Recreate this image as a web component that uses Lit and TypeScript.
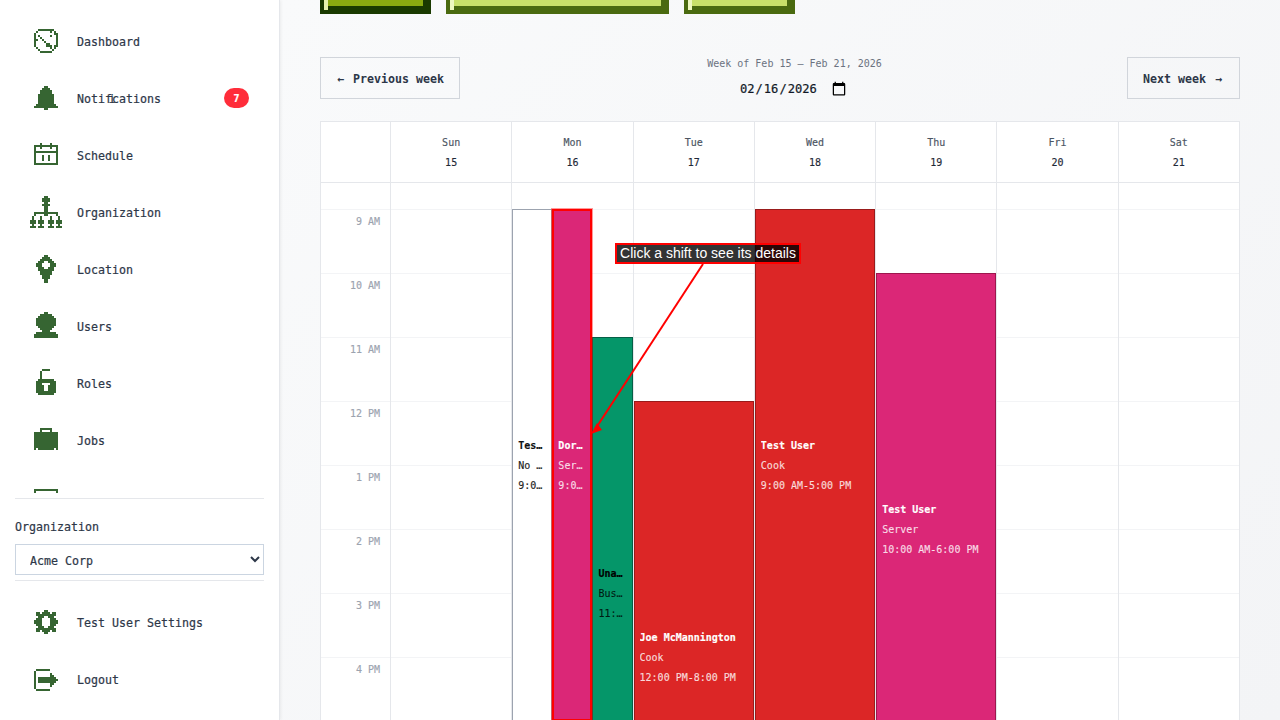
import { LitElement, html, css, svg } from "lit";
import { customElement } from "lit/decorators.js";

const ICONS: Record<string, string[]> = {
  dashboard: ["..########..",".#......#.#.","#.........##","#.#.....#..#","#..#.......#","##..#......#","#....#.....#","#.....##...#","#.....###.##",".#......#.#.","..#......#..","...######..."],
  bell: [".....##.....","....####....","...######...","...######...","..########..","..########..","..########..","..########..","..########..",".##########.","############",".....##....."],
  schedule: ["...#....#...","############","#..#....#..#","#..........#","############","#..........#","#...#..#...#","#...#..#...#","#...#..#...#","#..........#","############","............"],
  org: [".......##.......","......####......","......####......",".......##.......","......####......",".......##.......",".......##.......",".......##.......","..############..","..#....##....#..",".#...#....#...#.",".#...#....#...#.","###.###..###.###","###.###..###.###",".#...#....#...#.","###.###..###.###"],
  location: ["....##....","...####...","..######..",".###..###.","###....###","###....###",".###..###.",".########.","..######..","..######..","...####...","...####...","....##....","....##...."],
  users: [".....##.....","...######...","..########..",".##########.",".##########.",".##########.",".##########.","..########..","...######...","....####....",".##########.","############","############","............"],
  roles: ["...####...","..#.......","..#.......","..#.......","..#.......",".########.","##########","###....###","####..####","####..####","####..####","##########",".########.",".........."],
  jobs: ["...######...","...#....#...","############","############","############","############","############","############","############","############","#.########.#","............"],
  next: ["............","............","############","#..........#","#..........#","#..........#","#..........#","#..........#","#..........#","#..........#","#..........#","############"],
  gear: [".....##.....",".##.####.##.",".##########.","..###..###..",".###....###.","####....####","####....####",".###....###.","..###..###..",".##########.",".##.####.##.",".....##....."],
  logout: ["............",".#######....","#...........","#.......#...","#.......##..","#.#########.","#.##########","#.#########.","#.......##..","#.......#...","#...........",".#######...."],
};

function icon(name: string) {
  const rows = ICONS[name];
  const w = rows[0].length, h = rows.length;
  let d = "";
  rows.forEach((r, y) => {
    for (let x = 0; x < w; x++) if (r[x] === "#") {
      let e = x;
      while (e + 1 < w && r[e + 1] === "#") e++;
      d += `M${x} ${y}H${e + 1}V${y + 1}H${x}Z`;
      x = e;
    }
  });
  return html`<svg class="pix" width=${w * 2} height=${h * 2} viewBox="0 0 ${w} ${h}">${svg`<path d=${d}></path>`}</svg>`;
}

const notif = html`Noti<span class="lig">fi</span>cations`;
const NAV = [
  ["dashboard", "Dashboard", 0], ["bell", notif, 7], ["schedule", "Schedule", 0],
  ["org", "Organization", 0], ["location", "Location", 0], ["users", "Users", 0],
  ["roles", "Roles", 0], ["jobs", "Jobs", 0], ["next", "", 0],
] as [string, unknown, number][];

const DAYS = [["Sun", 15], ["Mon", 16], ["Tue", 17], ["Wed", 18], ["Thu", 19], ["Fri", 20], ["Sat", 21]];
const HOURS = ["9 AM", "10 AM", "11 AM", "12 PM", "1 PM", "2 PM", "3 PM", "4 PM"];

interface Shift { day: number; start: number; col: number; cols: number; name: string; role: string; time: string; kind: string; }
const SHIFTS: Shift[] = [
  { day: 1, start: 0, col: 0, cols: 3, name: "Test User", role: "No role", time: "9:00 AM-5:00 PM", kind: "open" },
  { day: 1, start: 0, col: 1, cols: 3, name: "Dorothy Smith", role: "Server", time: "9:00 AM-5:00 PM", kind: "pink hl" },
  { day: 1, start: 2, col: 2, cols: 3, name: "Unassigned", role: "Busser", time: "11:00 AM-7:00 PM", kind: "green" },
  { day: 2, start: 3, col: 0, cols: 1, name: "Joe McMannington", role: "Cook", time: "12:00 PM-8:00 PM", kind: "red" },
  { day: 3, start: 0, col: 0, cols: 1, name: "Test User", role: "Cook", time: "9:00 AM-5:00 PM", kind: "red" },
  { day: 4, start: 1, col: 0, cols: 1, name: "Test User", role: "Server", time: "10:00 AM-6:00 PM", kind: "pink" },
];

@customElement("app-root")
export class AppRoot extends LitElement {
  static styles = css`
    :host { display: flex; position: relative; width: 1280px; height: 720px; overflow: hidden;
      font-family: "DejaVu Sans Mono", "Liberation Mono", monospace; color: #2d3748; }
    * { box-sizing: border-box; }
    .side { width: 280px; flex: none; height: 720px; background: #fff; border-right: 1px solid #e5e7eb;
      box-shadow: 1px 0 3px rgba(0,0,0,.06); display: flex; flex-direction: column; position: relative; z-index: 1; }
    .nav { height: 493px; overflow: hidden; padding-top: 13px; flex: none; }
    .item { height: 57px; display: flex; align-items: center; font-size: 11.63px; padding-right: 30px;
      -webkit-text-stroke: 0.2px; }
    .slot { width: 32px; margin-left: 30px; margin-right: 15px; padding-bottom: 1px; display: flex;
      justify-content: center; flex: none; }
    .pix { display: block; fill: #366532; shape-rendering: crispEdges; }
    .label { flex: 1; padding-top: 1px; }
    .lig { letter-spacing: -3.5px; }
    .badge { width: 25px; height: 20px; margin-bottom: 1px; border-radius: 10px; background: #ff2d3a; color: #fff;
      font-size: 10px; font-weight: 700; display: flex; align-items: center; justify-content: center; }
    .orgbox { margin: 5px 15px 0; width: 249px; border-top: 1px solid #e5e7eb; border-bottom: 1px solid #e5e7eb;
      padding: 20px 0 5px; }
    .orglabel { font-size: 11.63px; line-height: 17px; margin-bottom: 8px; -webkit-text-stroke: 0.2px; }
    select { display: block; width: 249px; height: 31px; background: #fff; border: 1px solid #cbd5e1; border-radius: 0;
      padding: 2px 10px 0; font: 11.63px "DejaVu Sans Mono", monospace; color: #2d3748; -webkit-text-stroke: 0.2px; }
    .bottom { padding-top: 13px; }
    .main { flex: 1; height: 720px; padding: 0 40px; overflow: hidden;
      background: linear-gradient(135deg, #f9fafb, #f3f4f6); }
    .tops { display: flex; gap: 15px; height: 14px; }
    .pb { height: 14px; width: 111px; padding-left: 4px; display: flex; align-items: flex-start; }
    .pb.wide { width: 223px; }
    .pb.a { background: #1a3a00; --in: #8aaa10; --pale: #e6f3ac; }
    .pb.b { background: #4a6a10; --in: #c8e06a; --pale: #eef8c0; }
    .pb i { display: block; width: 4px; height: 10px; background: var(--pale); flex: none; }
    .pb b { display: block; height: 6px; flex: 1; margin-right: 8px; background: var(--in); }
    .head { display: flex; justify-content: space-between; align-items: flex-start; height: 42px; margin: 43px 0 22px; }
    .btn { height: 42px; border: 1px solid #d1d5db; display: flex; align-items: center; padding: 2px 15px 0;
      font-size: 11.63px; font-weight: 700; color: #2d3748; white-space: nowrap; gap: 7px; }
    .btn.nx { gap: 8px; }
    .btn span { display: block; width: 10px; text-align: center; }
    .center { display: flex; flex-direction: column; align-items: center; }
    .week { font-size: 10px; line-height: 14px; color: #6b7280; padding-left: 2px; }
    input { font: 12.1px "DejaVu Sans Mono", monospace; color: #111827; background: transparent; border: none;
      margin: 6px 1px 0 0; height: 24px; padding: 0; width: 108px; outline: none; -webkit-text-stroke: 0.2px; }
    input::-webkit-calendar-picker-indicator { width: 16px; height: 16px; padding: 0; margin: 0; }
    .table { border: 1px solid #e5e7eb; background: #fff; width: 920px; height: 640px; overflow: hidden; }
    .grid { display: grid; grid-template-columns: 69px repeat(7, 1fr); }
    .hcell { height: 61px; border-bottom: 1px solid #e5e7eb; border-left: 1px solid #e5e7eb; display: flex;
      flex-direction: column; align-items: center; font-size: 10px; line-height: 20px; padding-top: 11px;
      -webkit-text-stroke: 0.15px; }
    .hcell:first-child { border-left: none; }
    .dn { color: #4b5563; }
    .dd { color: #1f2937; }
    .col { position: relative; border-left: 1px solid #e5e7eb; }
    .gut { position: relative; }
    .allday { height: 26px; }
    .hour { height: 64px; border-top: 1px solid #f3f4f6; }
    .tlabel { font-size: 10px; line-height: 14px; color: #9ca3af; text-align: right; padding: 5px 10px 0 0;
      -webkit-text-stroke: 0.15px; }
    .shift { position: absolute; height: 512px; border: 1px solid; display: flex; flex-direction: column;
      justify-content: center; padding: 2px 5px 0; font-size: 10px; line-height: 20px; color: rgba(255,255,255,.8);
      -webkit-text-stroke: 0.15px; }
    .shift div { white-space: nowrap; overflow: hidden; text-overflow: ellipsis; }
    .shift .nm { font-weight: 700; color: #fff; }
    .open { background: #fff; border-color: #9ca3af; color: #222; }
    .open .nm { color: #111; }
    .red { background: #dc2626; border-color: #991b1b; }
    .pink { background: #db2777; border-color: #9d174d; }
    .green { background: #059669; border-color: #065f46; color: rgba(0,0,0,.8); }
    .green .nm { color: #000; }
    .hl { border: 2px solid #f00; box-shadow: 0 0 0 1px rgba(255,0,0,.4); z-index: 2; padding: 2px 4px 0; }
    .tip { position: absolute; z-index: 5; left: 615px; top: 243px; width: 186px; height: 21px; border: 2px solid #f00;
      background: rgba(0,0,0,.8); color: #fff; font: 14px/17px "Liberation Sans", Arial, sans-serif;
      text-align: center; white-space: nowrap; }
    .arrow { position: absolute; z-index: 4; left: 0; top: 0; pointer-events: none; }
  `;

  private navItem(i: [string, unknown, number]) {
    return html`<div class="item"><span class="slot">${icon(i[0])}</span><span class="label">${i[1]}</span>
      ${i[2] ? html`<span class="badge">${i[2]}</span>` : ""}</div>`;
  }

  render() {
    return html`
      <aside class="side">
        <div class="nav">${NAV.map((n) => this.navItem(n))}</div>
        <div class="orgbox">
          <div class="orglabel">Organization</div>
          <select><option>Acme Corp</option></select>
        </div>
        <div class="bottom">
          ${this.navItem(["gear", "Test User Settings", 0])}
          ${this.navItem(["logout", "Logout", 0])}
        </div>
      </aside>
      <main class="main">
        <div class="tops">
          <div class="pb a"><i></i><b></b></div>
          <div class="pb b wide"><i></i><b></b></div>
          <div class="pb b"><i></i><b></b></div>
        </div>
        <div class="head">
          <div class="btn"><span>←</span>Previous week</div>
          <div class="center">
            <div class="week">Week of Feb 15 – Feb 21, 2026</div>
            <input type="date" value="2026-02-16" />
          </div>
          <div class="btn nx">Next week<span>→</span></div>
        </div>
        <div class="table">
          <div class="grid">
            <div class="hcell"></div>
            ${DAYS.map((d) => html`<div class="hcell"><span class="dn">${d[0]}</span><span class="dd">${d[1]}</span></div>`)}
            <div class="gut">
              <div class="allday"></div>
              ${HOURS.map((h) => html`<div class="hour tlabel">${h}</div>`)}
            </div>
            ${DAYS.map((_, i) => html`<div class="col">
              <div class="allday"></div>
              ${HOURS.map(() => html`<div class="hour"></div>`)}
              ${SHIFTS.filter((s) => s.day === i).map((s) => html`
                <div class="shift ${s.kind}" style="top:${26 + s.start * 64}px;left:${(s.col / s.cols) * 100}%;width:${100 / s.cols}%">
                  <div class="nm">${s.name}</div><div>${s.role}</div><div>${s.time}</div>
                </div>`)}
            </div>`)}
          </div>
        </div>
      </main>
      <svg class="arrow" width="1280" height="720" viewBox="0 0 1280 720">
        <line x1="703" y1="264" x2="596" y2="428" stroke="#f00" stroke-width="2"></line>
        <polygon points="591,434 597,423 602,430" fill="#f00"></polygon>
      </svg>
      <div class="tip">Click a shift to see its details</div>
    `;
  }
}
